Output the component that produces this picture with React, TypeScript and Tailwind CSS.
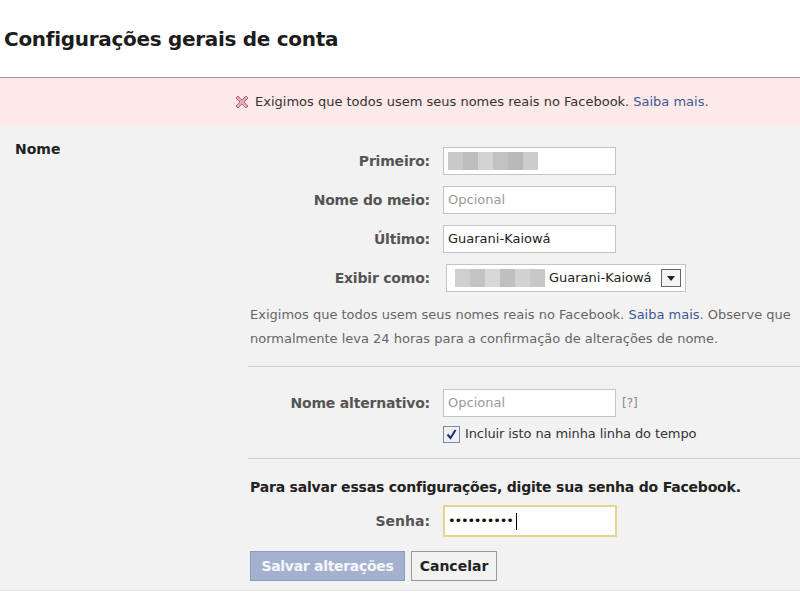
import React from 'react';

const font = { fontFamily: '"DejaVu Sans", Verdana, sans-serif' };

// pixelated block that stands in for the blurred first name
const Blur = ({ cells }: { cells: string[] }) => (
  <div className="flex">
    {cells.map((c, i) => (
      <div key={i} className={`w-[15px] h-[18px] ${c}`} />
    ))}
  </div>
);

const Row = ({ label, children }: { label: string; children: React.ReactNode }) => (
  <div className="flex items-center h-[28px]">
    <div className="w-[180px] text-right font-bold text-[14px] text-[#555] tracking-[-0.2px]">{label}</div>
    <div className="ml-[13px] flex items-center">{children}</div>
  </div>
);

const TextBox = ({ children, w = 'w-[173px]' }: { children?: React.ReactNode; w?: string }) => (
  <div className={`${w} h-[28px] bg-white border border-[#c4c4c4] flex items-center px-[4px] text-[13px]`}>
    {children}
  </div>
);

export default function App() {
  return (
    <div className="w-[800px] h-[600px] bg-white overflow-hidden text-[#333]" style={font}>
      <div className="h-[77px] pt-[26px] pl-[4px]">
        <h1 className="text-[20px] font-bold text-[#1c1c1c] leading-[26px] tracking-[-0.3px]">Configurações gerais de conta</h1>
      </div>

      <div className="border-t border-[#a09a98]">
        <div className="h-[47px] bg-[#fde9e8] flex items-center pl-[235px] text-[13px] text-[#333]">
          <svg width="14" height="14" viewBox="0 0 14 14" className="mr-[6px]">
            <path
              d="M1 3L3 1L7 5L11 1L13 3L9 7L13 11L11 13L7 9L3 13L1 11L5 7Z"
              fill="#e7a9b3"
              stroke="#b56c7a"
              strokeWidth="1"
              strokeLinejoin="round"
            />
          </svg>
          <span>Exigimos que todos usem seus nomes reais no Facebook.</span>
          <span className="ml-[4px] text-[#3b5998]">Saiba mais.</span>
        </div>

        <div className="bg-[#f2f2f2] h-[466px] border-b border-[#e2e2e2] flex pt-[14px]">
          <div className="w-[250px] pl-[15px] font-bold text-[14px] text-[#222]">Nome</div>

          <div className="w-[550px] pt-[8px]">
            <div className="flex flex-col gap-[11px]">
              <Row label="Primeiro:">
                <TextBox>
                  <Blur cells={['bg-[#c9c9c9]', 'bg-[#bdbdbd]', 'bg-[#d3d3d3]', 'bg-[#c2c2c2]', 'bg-[#b9b9b9]', 'bg-[#cccccc]']} />
                </TextBox>
              </Row>
              <Row label="Nome do meio:">
                <TextBox>
                  <span className="text-[#9a9a9a]">Opcional</span>
                </TextBox>
              </Row>
              <Row label="Último:">
                <TextBox>
                  <span className="text-[#222]">Guarani-Kaiowá</span>
                </TextBox>
              </Row>
              <Row label="Exibir como:">
                <div className="ml-[3px] w-[240px] h-[28px] bg-white border border-[#c4c4c4] flex items-center pl-[8px] pr-[4px] text-[13px] text-[#222]">
                  <Blur cells={['bg-[#cfcfcf]', 'bg-[#c4c4c4]', 'bg-[#d8d8d8]', 'bg-[#c0c0c0]', 'bg-[#d2d2d2]', 'bg-[#c8c8c8]']} />
                  <span className="ml-[4px]">Guarani-Kaiowá</span>
                  <div className="ml-auto w-[20px] h-[18px] border border-[#666] bg-[#f4f4f4] flex items-center justify-center">
                    <svg width="8" height="5" viewBox="0 0 8 5">
                      <path d="M0 0h8L4 5z" fill="#222" />
                    </svg>
                  </div>
                </div>
              </Row>
            </div>

            <p className="mt-[11px] text-[13px] leading-[24px] text-[#666]">
              Exigimos que todos usem seus nomes reais no Facebook. <span className="text-[#3b5998]">Saiba mais</span>. Observe que
              <br />
              normalmente leva 24 horas para a confirmação de alterações de nome.
            </p>

            <div className="mt-[15px] border-t border-[#cfcfcf] -ml-[2px]" />

            <div className="mt-[22px]">
              <Row label="Nome alternativo:">
                <TextBox>
                  <span className="text-[#9a9a9a]">Opcional</span>
                </TextBox>
                <span className="ml-[6px] text-[12px] text-[#888]">[?]</span>
              </Row>
              <div className="flex items-center ml-[193px] mt-[8px] h-[18px]">
                <div className="w-[17px] h-[17px] border border-[#7a8aa8] bg-[#eef0f6] flex items-center justify-center">
                  <svg width="11" height="11" viewBox="0 0 11 11">
                    <path d="M1.5 5.5l3 3.5 5-8" fill="none" stroke="#1f2f7a" strokeWidth="2" />
                  </svg>
                </div>
                <span className="ml-[5px] text-[13px] text-[#333] tracking-[-0.1px]">Incluir isto na minha linha do tempo</span>
              </div>
            </div>

            <div className="mt-[15px] border-t border-[#cfcfcf] -ml-[2px]" />

            <div className="mt-[18px] font-bold text-[14px] text-[#222] tracking-[-0.2px]">
              Para salvar essas configurações, digite sua senha do Facebook.
            </div>

            <div className="mt-[7px] flex items-center h-[32px]">
              <div className="w-[180px] text-right font-bold text-[14px] text-[#555]">Senha:</div>
              <div className="ml-[13px] w-[174px] h-[32px] bg-white border-2 border-[#e6d38e] flex items-center pl-[3px] text-[13px] text-[#111] tracking-[-1.2px]">
                ••••••••••<span className="ml-[3px] w-[1px] h-[17px] bg-black" />
              </div>
            </div>

            <div className="mt-[14px] flex gap-[6px]">
              <div className="w-[155px] h-[30px] bg-[#a4b1ce] border border-[#8c9bbd] text-white/90 font-bold text-[14px] tracking-[-0.3px] flex items-center justify-center">
                Salvar alterações
              </div>
              <div className="w-[86px] h-[30px] bg-[#f2f2f2] border border-[#999] text-[#222] font-bold text-[14px] flex items-center justify-center">
                Cancelar
              </div>
            </div>
          </div>
        </div>
      </div>
    </div>
  );
}
